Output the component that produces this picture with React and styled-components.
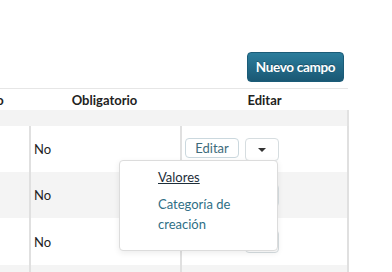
import React from 'react';
import styled, { createGlobalStyle } from 'styled-components';

const GlobalStyle = createGlobalStyle`
  body {
    margin: 0;
    font-family: Lato, "Liberation Sans", sans-serif;
    background: #fff;
  }
`;

const Page = styled.div`
  position: relative;
  width: 392px;
  height: 272px;
  overflow: hidden;
  background: #fff;
`;

const Toolbar = styled.div`
  display: flex;
  justify-content: flex-end;
  padding: 52px 48px 6px 0;
`;

const PrimaryButton = styled.button`
  height: 30px;
  width: 97px;
  padding: 0;
  border: 1px solid #1b5c78;
  border-radius: 4px;
  background: linear-gradient(#2c7d9c, #1a5874);
  color: #fff;
  font-family: Lato, sans-serif;
  font-weight: 700;
  font-size: 13.5px;
  letter-spacing: -0.3px;
  text-shadow: 0 -1px 0 rgba(0, 0, 0, 0.25);
  cursor: pointer;
`;

const Grid = styled.div`
  margin-left: -117px;
  width: 466px;
`;

const Row = styled.div`
  display: grid;
  grid-template-columns: 146px 151px 169px;
  height: ${p => p.$height || 46}px;
  background: ${p => (p.$striped ? '#f4f4f4' : '#fff')};
`;

const HeadRow = styled(Row)`
  border-top: 1px solid #e6e6e6;
  box-sizing: border-box;
  width: 465px;
`;

const HeadCell = styled.div`
  display: flex;
  align-items: center;
  justify-content: center;
  padding-right: ${p => p.$shift || 0}px;
  font-weight: 700;
  font-size: 13px;
  color: #222;
`;

const Band = styled.div`
  height: 16px;
  background: #f3f3f3;
  border-right: 2px solid #e2e2e2;
  box-sizing: border-box;
  width: 466px;
`;

const Cell = styled.div`
  display: flex;
  align-items: center;
  box-sizing: border-box;
  padding-left: 3px;
  font-size: 13px;
  color: #222;
  border-left: ${p => (p.$first ? 'none' : '2px solid #e0e0e0')};
  border-right: ${p => (p.$last ? '2px solid #e0e0e0' : 'none')};
`;

const Actions = styled.div`
  display: flex;
  align-items: flex-start;
  gap: 6px;
`;

const EditButton = styled.button`
  width: 54px;
  height: 20px;
  padding: 0;
  border: 1px solid #cbd8de;
  border-radius: 4px;
  background: #fff;
  color: #3d6b7b;
  font-family: Lato, sans-serif;
  font-size: 13px;
`;

const Dropdown = styled.div`
  position: relative;
`;

const Toggle = styled.button`
  display: flex;
  align-items: center;
  justify-content: center;
  width: 34px;
  height: 23px;
  padding: 0;
  border: 1px solid #d6dde0;
  border-radius: 4px;
  background: #fff;
`;

const Caret = styled.span`
  width: 0;
  height: 0;
  border-left: 4px solid transparent;
  border-right: 4px solid transparent;
  border-top: 4px solid #333;
  margin-top: 1px;
`;

const Menu = styled.ul`
  position: absolute;
  z-index: 10;
  top: calc(100% - 1px);
  right: 1px;
  width: 159px;
  box-sizing: border-box;
  margin: 0;
  padding: 3px 0 12px;
  list-style: none;
  background: #fff;
  border: 1px solid #dcdcdc;
  border-radius: 4px;
  box-shadow: 0 2px 6px rgba(0, 0, 0, 0.08);
`;

const MenuItem = styled.li`
  padding: 3px 38px 4px;
  font-size: 13px;
  line-height: 20px;
  color: ${p => (p.$active ? '#1d2e3a' : '#2f6f86')};
  text-decoration: ${p => (p.$active ? 'underline' : 'none')};
`;

const rows = [
  { id: 1, required: 'No', open: true },
  { id: 2, required: 'No' },
  { id: 3, required: 'No' }
];

const ActionCell = ({ open }) => (
  <Actions>
    <EditButton>Editar</EditButton>
    <Dropdown>
      <Toggle>
        <Caret />
      </Toggle>
      {open && (
        <Menu>
          <MenuItem $active>Valores</MenuItem>
          <MenuItem>Categoría de creación</MenuItem>
        </Menu>
      )}
    </Dropdown>
  </Actions>
);

export default function App() {
  return (
    <Page>
      <GlobalStyle />
      <Toolbar>
        <PrimaryButton>Nuevo campo</PrimaryButton>
      </Toolbar>
      <Grid>
        <HeadRow $height={22}>
          <HeadCell $shift={14}>Nombre del campo</HeadCell>
          <HeadCell>Obligatorio</HeadCell>
          <HeadCell>Editar</HeadCell>
        </HeadRow>
        <Band />
        {rows.map((row, i) => (
          <Row key={row.id} $striped={i % 2 === 1} $height={i === 2 ? 47 : 46}>
            <Cell $first />
            <Cell>{row.required}</Cell>
            <Cell $last>
              <ActionCell open={row.open} />
            </Cell>
          </Row>
        ))}
        <Row $striped>
          <Cell $first />
          <Cell />
          <Cell $last />
        </Row>
      </Grid>
    </Page>
  );
}
